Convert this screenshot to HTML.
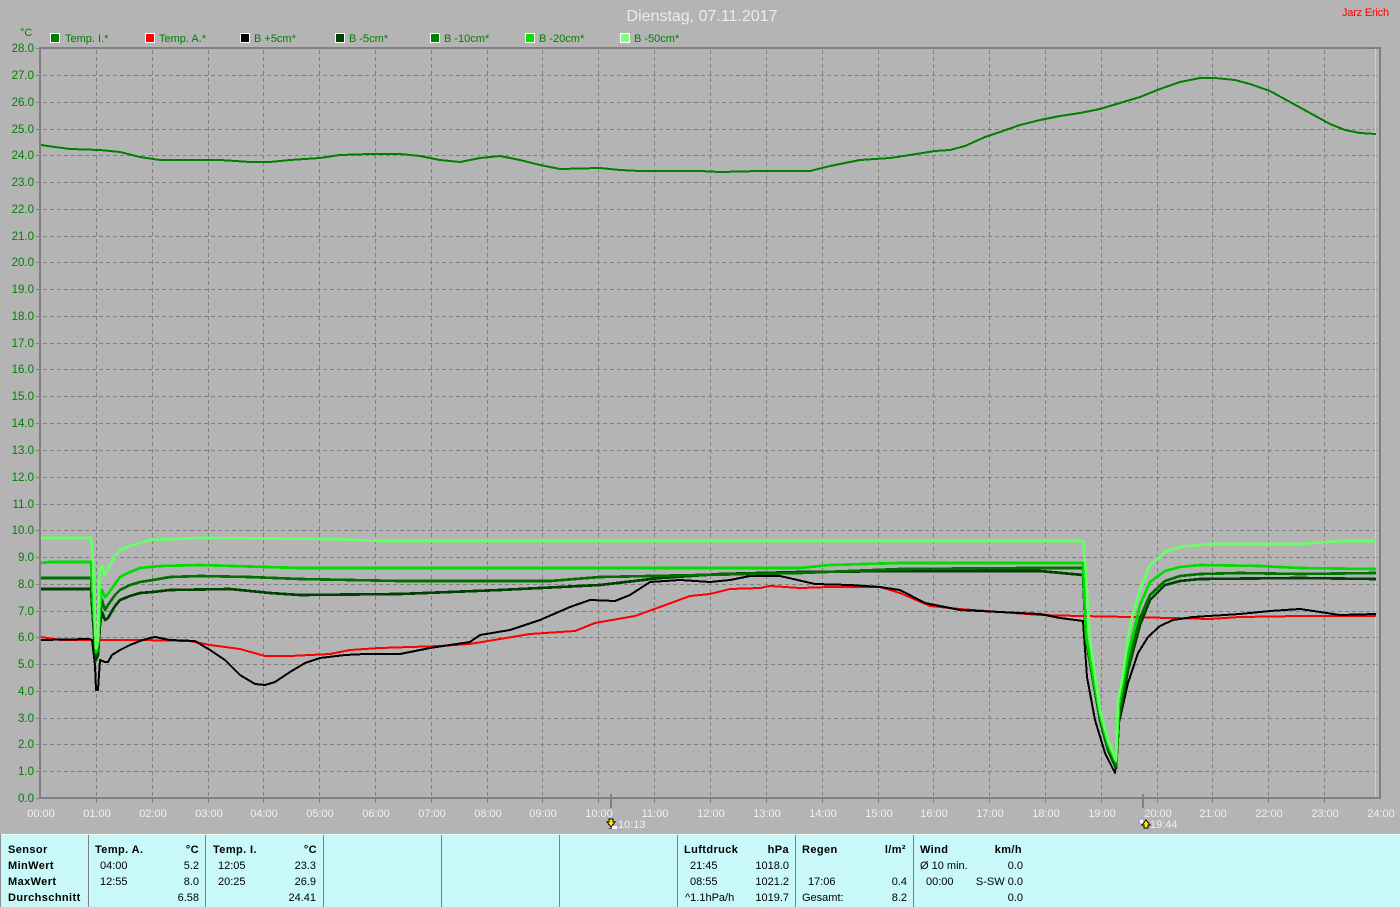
<!DOCTYPE html>
<html><head><meta charset="utf-8"><title>Dienstag, 07.11.2017</title>
<style>
html,body{margin:0;padding:0;background:#b4b4b4;width:1400px;height:907px;overflow:hidden}
svg{display:block}
text{font-family:"Liberation Sans",sans-serif;font-size:11px}
.y{fill:#008000;text-anchor:end;font-size:11.5px}
.x{fill:#f0f0f0;text-anchor:middle;font-size:11px}
.l{fill:#008000}
.p{fill:#000}
.b{fill:#000;font-weight:bold;letter-spacing:.4px}
.r{text-anchor:end}
.c{fill:none;stroke-width:2;shape-rendering:crispEdges;stroke-linejoin:round}
.t{stroke-width:2.7}
</style></head><body>
<svg width="1400" height="907" viewBox="0 0 1400 907" xmlns="http://www.w3.org/2000/svg">
<rect width="1400" height="907" fill="#b4b4b4"/>
<text x="702" y="21" text-anchor="middle" style="font-size:16px" fill="#ececec">Dienstag, 07.11.2017</text>
<text x="1342" y="16" fill="#ff0000" letter-spacing="-.2">Jarz Erich</text>
<text x="20" y="36" class="l">°C</text>

<g shape-rendering="crispEdges">
<rect x="50.5" y="33.5" width="9" height="9" fill="#008000" stroke="#fff"/>
<rect x="145.5" y="33.5" width="9" height="9" fill="#ff0000" stroke="#fff"/>
<rect x="240.5" y="33.5" width="9" height="9" fill="#000" stroke="#fff"/>
<rect x="335.5" y="33.5" width="9" height="9" fill="#004000" stroke="#fff"/>
<rect x="430.5" y="33.5" width="9" height="9" fill="#008000" stroke="#fff"/>
<rect x="525.5" y="33.5" width="9" height="9" fill="#00e000" stroke="#fff"/>
<rect x="620.5" y="33.5" width="9" height="9" fill="#80ff80" stroke="#fff"/>
</g>
<text x="65" y="42" class="l">Temp. I.*</text>
<text x="159" y="42" class="l">Temp. A.*</text>
<text x="254" y="42" class="l">B +5cm*</text>
<text x="349" y="42" class="l">B -5cm*</text>
<text x="444" y="42" class="l">B -10cm*</text>
<text x="539" y="42" class="l">B -20cm*</text>
<text x="634" y="42" class="l">B -50cm*</text>

<!-- grid -->
<path shape-rendering="crispEdges" fill="none" stroke="#808080" stroke-width="1" stroke-dasharray="4 3" d="M96.5 50V798M152.5 50V798M208.5 50V798M263.5 50V798M319.5 50V798M375.5 50V798M431.5 50V798M487.5 50V798M542.5 50V798M598.5 50V798M654.5 50V798M710.5 50V798M766.5 50V798M822.5 50V798M878.5 50V798M933.5 50V798M989.5 50V798M1045.5 50V798M1101.5 50V798M1157.5 50V798M1212.5 50V798M1268.5 50V798M1324.5 50V798"/>
<path shape-rendering="crispEdges" fill="none" stroke="#808080" stroke-width="1" stroke-dasharray="4 3" d="M36 75.5H1379M36 102.5H1379M36 129.5H1379M36 155.5H1379M36 182.5H1379M36 209.5H1379M36 236.5H1379M36 262.5H1379M36 289.5H1379M36 316.5H1379M36 343.5H1379M36 369.5H1379M36 396.5H1379M36 423.5H1379M36 450.5H1379M36 477.5H1379M36 504.5H1379M36 530.5H1379M36 557.5H1379M36 584.5H1379M36 611.5H1379M36 637.5H1379M36 664.5H1379M36 691.5H1379M36 718.5H1379M36 744.5H1379M36 771.5H1379"/>
<path shape-rendering="crispEdges" fill="none" stroke="#808080" stroke-width="1" d="M36 48.5H40M36 798.5H40M96.5 799V803M152.5 799V803M208.5 799V803M263.5 799V803M319.5 799V803M375.5 799V803M431.5 799V803M487.5 799V803M542.5 799V803M598.5 799V803M654.5 799V803M710.5 799V803M766.5 799V803M822.5 799V803M878.5 799V803M933.5 799V803M989.5 799V803M1045.5 799V803M1101.5 799V803M1157.5 799V803M1212.5 799V803M1268.5 799V803M1324.5 799V803"/>
<g shape-rendering="crispEdges" fill="#808080">
<rect x="39" y="47" width="2" height="752"/>
<rect x="39" y="47" width="1342" height="2"/>
<rect x="39" y="797" width="1342" height="2"/>
<rect x="1379" y="47" width="2" height="752"/>
<rect x="1375" y="49" width="1" height="748" fill="#d0d0d0"/>
<rect x="610" y="794" width="2" height="14"/>
<rect x="1142" y="794" width="2" height="14"/>
</g>

<!-- y labels -->
<text class="y" x="34" y="52">28.0</text><text class="y" x="34" y="79">27.0</text><text class="y" x="34" y="106">26.0</text><text class="y" x="34" y="133">25.0</text><text class="y" x="34" y="159">24.0</text><text class="y" x="34" y="186">23.0</text><text class="y" x="34" y="213">22.0</text><text class="y" x="34" y="240">21.0</text><text class="y" x="34" y="266">20.0</text><text class="y" x="34" y="293">19.0</text><text class="y" x="34" y="320">18.0</text><text class="y" x="34" y="347">17.0</text><text class="y" x="34" y="373">16.0</text><text class="y" x="34" y="400">15.0</text><text class="y" x="34" y="427">14.0</text><text class="y" x="34" y="454">13.0</text><text class="y" x="34" y="481">12.0</text><text class="y" x="34" y="508">11.0</text><text class="y" x="34" y="534">10.0</text><text class="y" x="34" y="561">9.0</text><text class="y" x="34" y="588">8.0</text><text class="y" x="34" y="615">7.0</text><text class="y" x="34" y="641">6.0</text><text class="y" x="34" y="668">5.0</text><text class="y" x="34" y="695">4.0</text><text class="y" x="34" y="722">3.0</text><text class="y" x="34" y="748">2.0</text><text class="y" x="34" y="775">1.0</text><text class="y" x="34" y="802">0.0</text>

<!-- x labels -->
<text class="x" x="41" y="817">00:00</text><text class="x" x="97" y="817">01:00</text><text class="x" x="153" y="817">02:00</text><text class="x" x="209" y="817">03:00</text><text class="x" x="264" y="817">04:00</text><text class="x" x="320" y="817">05:00</text><text class="x" x="376" y="817">06:00</text><text class="x" x="432" y="817">07:00</text><text class="x" x="488" y="817">08:00</text><text class="x" x="543" y="817">09:00</text><text class="x" x="599" y="817">10:00</text><text class="x" x="655" y="817">11:00</text><text class="x" x="711" y="817">12:00</text><text class="x" x="767" y="817">13:00</text><text class="x" x="823" y="817">14:00</text><text class="x" x="879" y="817">15:00</text><text class="x" x="934" y="817">16:00</text><text class="x" x="990" y="817">17:00</text><text class="x" x="1046" y="817">18:00</text><text class="x" x="1102" y="817">19:00</text><text class="x" x="1158" y="817">20:00</text><text class="x" x="1213" y="817">21:00</text><text class="x" x="1269" y="817">22:00</text><text class="x" x="1325" y="817">23:00</text><text class="x" x="1381" y="817">24:00</text>

<!-- sunrise / sunset -->
<path shape-rendering="crispEdges" d="M609 819h4v3h2l-4 5-4-5h2z" fill="#ffee00" stroke="#000" stroke-width="1"/>
<rect x="612" y="826" width="5" height="3" fill="#fff"/>
<rect x="609" y="828" width="3" height="1" fill="#3a3aa0"/>
<text x="618" y="828" fill="#f0f0f0">10:13</text>
<rect x="1139" y="819" width="5" height="5" fill="#fff" stroke="#5050b0" stroke-width=".6" rx="2"/>
<path shape-rendering="crispEdges" d="M1146 820l4 5h-2v3h-4v-3h-2z" fill="#ffee00" stroke="#000" stroke-width="1"/>
<text x="1150" y="828" fill="#f0f0f0">19:44</text>

<!-- curves -->
<polyline class="c" stroke="#008000" points="41,145 55,147 70,149 100,150 120,152 140,157 160,160 220,160 250,162 270,162 290,160 320,158 340,155 370,154 400,154 420,156 440,160 460,162 480,158 500,156 520,160 540,165 560,169 600,168 620,170 640,171 700,171 720,172 760,171 810,171 830,166 860,160 890,158 910,155 935,151 950,150 965,146 985,137 1000,132 1020,125 1040,120 1060,116 1080,113 1100,109 1120,103 1140,97 1160,89 1180,82 1200,78 1215,78 1235,80 1250,84 1270,91 1290,102 1310,113 1330,124 1345,130 1360,133 1376,134"/>
<polyline class="c" stroke="#ff0000" points="41,637 60,640 100,640 140,640 190,641 210,645 240,649 265,656 290,656 330,654 350,650 380,648 410,647 440,646 470,644 500,639 530,634 575,631 595,623 635,616 660,607 690,596 710,594 730,589 760,588 770,586 800,588 830,587 880,587 900,593 930,606 960,609 1000,612 1040,615 1080,616 1130,617 1170,618 1210,619 1240,617 1300,616 1376,616"/>
<polyline class="c" stroke="#000" points="41,640 90,639 92,640 95,665 96,690 98,690 99,675 100,660 105,662 108,662 112,655 120,650 130,645 140,641 150,638 155,637 170,640 195,641 210,650 225,660 240,675 255,684 265,685 275,682 290,672 305,663 320,658 345,655 365,654 400,654 430,648 470,642 480,635 510,630 540,620 570,607 590,600 615,601 630,595 650,582 680,580 710,582 730,580 750,576 780,576 815,584 850,585 880,587 900,590 925,603 960,610 1000,612 1040,614 1060,618 1083,621 1087,677 1095,720 1105,753 1115,773 1119,723 1128,683 1138,653 1148,637 1160,626 1173,620 1193,617 1240,614 1270,611 1300,609 1320,612 1340,615 1376,614"/>
<polyline class="c t" stroke="#004000" points="41,589 91,589 93,620 96,660 98,655 100,625 102,612 105,620 108,618 115,606 120,600 130,596 140,593 153,592 170,590 230,589 270,593 300,595 400,594 500,590 600,585 660,578 720,574 800,572 900,571 1040,571 1083,575 1086,640 1100,720 1108,750 1116,768 1119,720 1128,670 1140,625 1150,600 1165,585 1180,581 1200,579 1300,578 1376,579"/>
<polyline class="c t" stroke="#007000" points="41,578 91,578 93,610 96,655 98,650 100,615 102,600 105,610 108,605 115,595 120,590 130,585 140,582 153,580 170,577 200,576 250,577 300,579 400,581 550,581 600,577 700,575 800,573 900,569 1030,568 1083,568 1086,640 1100,718 1108,748 1116,766 1119,715 1128,665 1140,618 1150,595 1165,581 1180,576 1200,574 1240,573 1300,574 1376,573"/>
<polyline class="c t" stroke="#00dd00" points="41,563 50,562 91,562 93,600 96,652 98,645 100,605 102,590 105,597 108,594 115,584 120,577 130,572 140,568 160,566 200,565 300,568 800,568 830,565 900,563 1083,563 1086,635 1100,715 1108,745 1116,762 1119,705 1128,655 1140,605 1150,582 1165,571 1180,567 1200,565 1260,566 1300,568 1376,569"/>
<polyline class="c t" stroke="#66ff66" points="41,538 91,538 93,560 96,648 98,640 100,568 102,566 105,575 108,568 115,556 120,550 130,546 150,540 200,538 330,539 380,541 1083,541 1085,560 1090,640 1100,710 1108,740 1116,760 1118,700 1122,680 1130,625 1140,590 1150,565 1165,552 1180,547 1210,544 1300,544 1340,541 1376,541"/>

<!-- panel -->
<g shape-rendering="crispEdges">
<rect x="0" y="834" width="1400" height="73" fill="#c8f8f8"/>
<rect x="0" y="834" width="1400" height="1" fill="#e8ffff"/>
<rect x="0" y="834" width="1" height="73" fill="#909090"/>
<g fill="#808080">
<rect x="88" y="835" width="1" height="72"/><rect x="205" y="835" width="1" height="72"/><rect x="323" y="835" width="1" height="72"/><rect x="441" y="835" width="1" height="72"/><rect x="559" y="835" width="1" height="72"/><rect x="677" y="835" width="1" height="72"/><rect x="795" y="835" width="1" height="72"/><rect x="913" y="835" width="1" height="72"/>
</g>
</g>
<text class="b" x="8" y="853">Sensor</text><text class="b" x="8" y="869">MinWert</text><text class="b" x="8" y="885">MaxWert</text><text class="b" x="8" y="901">Durchschnitt</text>

<text class="b" x="95" y="853">Temp. A.</text><text class="b r" x="199" y="853">°C</text>
<text class="p" x="100" y="869">04:00</text><text class="p r" x="199" y="869">5.2</text>
<text class="p" x="100" y="885">12:55</text><text class="p r" x="199" y="885">8.0</text>
<text class="p r" x="199" y="901">6.58</text>

<text class="b" x="213" y="853">Temp. I.</text><text class="b r" x="317" y="853">°C</text>
<text class="p" x="218" y="869">12:05</text><text class="p r" x="316" y="869">23.3</text>
<text class="p" x="218" y="885">20:25</text><text class="p r" x="316" y="885">26.9</text>
<text class="p r" x="316" y="901">24.41</text>

<text class="b" x="684" y="853">Luftdruck</text><text class="b r" x="789" y="853">hPa</text>
<text class="p" x="690" y="869">21:45</text><text class="p r" x="789" y="869">1018.0</text>
<text class="p" x="690" y="885">08:55</text><text class="p r" x="789" y="885">1021.2</text>
<text class="p" x="685" y="901">^1.1hPa/h</text><text class="p r" x="789" y="901">1019.7</text>

<text class="b" x="802" y="853">Regen</text><text class="b r" x="906" y="853">l/m²</text>
<text class="p" x="808" y="885">17:06</text><text class="p r" x="907" y="885">0.4</text>
<text class="p" x="802" y="901">Gesamt:</text><text class="p r" x="907" y="901">8.2</text>

<text class="b" x="920" y="853">Wind</text><text class="b r" x="1022" y="853">km/h</text>
<text class="p" x="920" y="869">Ø 10 min.</text><text class="p r" x="1023" y="869">0.0</text>
<text class="p" x="926" y="885">00:00</text><text class="p r" x="1023" y="885">S-SW 0.0</text>
<text class="p r" x="1023" y="901">0.0</text>
</svg>
</body></html>
